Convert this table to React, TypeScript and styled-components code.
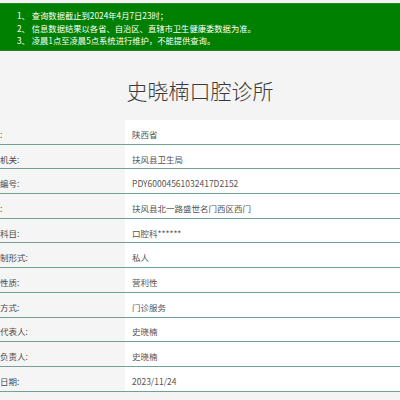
import React from "react";
import styled, { createGlobalStyle } from "styled-components";

const GlobalStyle = createGlobalStyle`
  html, body {
    margin: 0;
    padding: 0;
    background: #f4f4f4;
    font-family: "Noto Sans CJK SC", "Noto Sans", sans-serif;
  }
`;

const Page = styled.div`
  width: 400px;
  height: 400px;
  overflow: hidden;
  background: #f4f4f4;
  padding-top: 3px;
  box-sizing: border-box;
`;

const Notice = styled.div`
  background: #008000;
  border-top: 1px solid #2f7f2f;
  border-bottom: 1px solid #2f7f2f;
  height: 48px;
  box-sizing: border-box;
  padding: 5px 0 0 17px;
  color: #ffffff;
  font-size: 8.3px;
  line-height: 12.5px;
`;

const NoticeLine = styled.div`
  white-space: nowrap;
`;

const Title = styled.h1`
  margin: 24px 0 15px;
  text-align: center;
  font-size: 21px;
  line-height: 30px;
  font-weight: 300;
  color: #3a3a3a;
`;

const Table = styled.div`
  display: flex;
  flex-direction: column;
`;

const Row = styled.div`
  display: grid;
  grid-template-columns: 125px 1fr;
  height: 24.7px;
  box-sizing: border-box;
  border-bottom: 1px solid #73a094;
`;

const Label = styled.div`
  background: #f5f5f5;
  overflow: hidden;
  white-space: nowrap;
  text-indent: -17px;
  display: flex;
  align-items: center;
  padding-top: 4px;
  font-size: 8.5px;
  color: #4a4a4a;
`;

const Value = styled.div`
  background: #ffffff;
  display: flex;
  align-items: center;
  padding-left: 7px;
  padding-top: 4px;
  font-size: 8.5px;
  color: #555555;
  white-space: nowrap;
`;

const rows: [string, string][] = [
  ["所在:", "陕西省"],
  ["发证机关:", "扶风县卫生局"],
  ["登记编号:", "PDY60004561032417D2152"],
  ["地址:", "扶风县北一路盛世名门西区西门"],
  ["诊疗科目:", "口腔科******"],
  ["所有制形式:", "私人"],
  ["经营性质:", "营利性"],
  ["服务方式:", "门诊服务"],
  ["法定代表人:", "史晓楠"],
  ["主要负责人:", "史晓楠"],
  ["发证日期:", "2023/11/24"],
];

export default function App() {
  return (
    <>
      <GlobalStyle />
      <Page>
        <Notice>
          <NoticeLine>1、 查询数据截止到2024年4月7日23时；</NoticeLine>
          <NoticeLine>2、 信息数据结果以各省、自治区、直辖市卫生健康委数据为准。</NoticeLine>
          <NoticeLine>3、 凌晨1点至凌晨5点系统进行维护，不能提供查询。</NoticeLine>
        </Notice>
        <Title>史晓楠口腔诊所</Title>
        <Table>
          {rows.map(([l, v]) => (
            <Row key={l}>
              <Label>{l}</Label>
              <Value>{v}</Value>
            </Row>
          ))}
        </Table>
      </Page>
    </>
  );
}
